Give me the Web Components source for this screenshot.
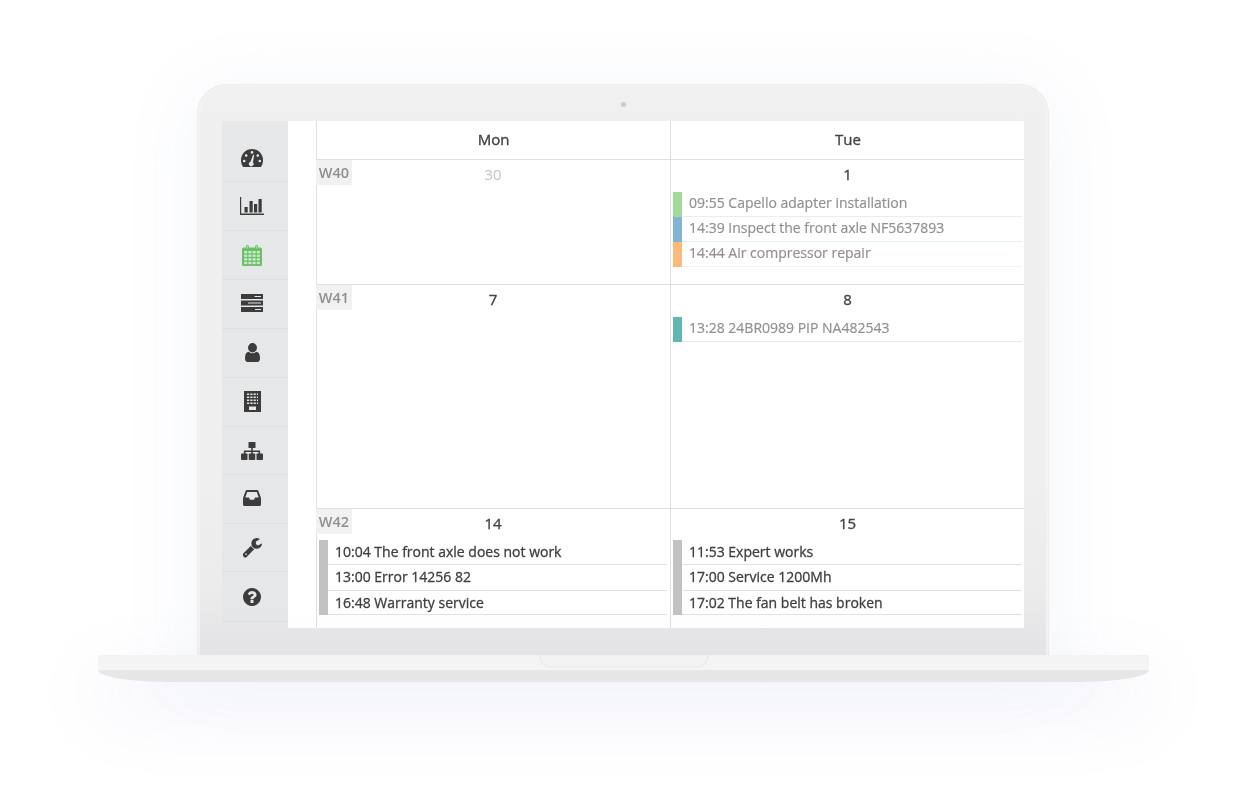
<!DOCTYPE html>
<html><head><meta charset="utf-8"><title>Calendar</title>
<style>
html,body{margin:0;padding:0;background:#fff;overflow:hidden}
body{font-family:"Open Sans","Liberation Sans",sans-serif;width:1248px;height:798px}
</style></head><body>
<x-laptop>
  <x-sidebar slot="sidebar">
    <x-nav icon="gauge"></x-nav><x-nav icon="chart"></x-nav><x-nav icon="calendar" active></x-nav><x-nav icon="server"></x-nav><x-nav icon="user"></x-nav><x-nav icon="building"></x-nav><x-nav icon="sitemap"></x-nav><x-nav icon="inbox"></x-nav><x-nav icon="wrench"></x-nav><x-nav icon="help"></x-nav>
  </x-sidebar>
  <x-calendar slot="main">
    <x-week h="124">
      <x-day week="W40" num="30" muted></x-day>
      <x-day num="1">
        <x-event c="#a5d99c" l="#e6f3e4" dim>09:55 Capello adapter installation</x-event>
        <x-event c="#85b4d2" l="#e0eef7" dim>14:39 Inspect the front axle NF5637893</x-event>
        <x-event c="#fbb97b" l="#fbf0e6" dim>14:44 Air compressor repair</x-event>
      </x-day>
    </x-week>
    <x-week h="223">
      <x-day week="W41" num="7"></x-day>
      <x-day num="8"><x-event c="#63b5b0" l="#dcefee" dim>13:28 24BR0989 PIP NA482543</x-event></x-day>
    </x-week>
    <x-week h="119" last>
      <x-day week="W42" num="14" tight>
        <x-event c="#c2c2c2" l="#e2e2e2">10:04 The front axle does not work</x-event>
        <x-event c="#c2c2c2" l="#e2e2e2" h="26">13:00 Error 14256 82</x-event>
        <x-event c="#c2c2c2" l="#e2e2e2" h="24">16:48 Warranty service</x-event>
      </x-day>
      <x-day num="15" tight>
        <x-event c="#c2c2c2" l="#e2e2e2">11:53 Expert works</x-event>
        <x-event c="#c2c2c2" l="#e2e2e2" h="26">17:00 Service 1200Mh</x-event>
        <x-event c="#c2c2c2" l="#e2e2e2" h="24">17:02 The fan belt has broken</x-event>
      </x-day>
    </x-week>
  </x-calendar>
</x-laptop>
<script>
const calCells=[6,9.6,13.2,16.8].map(y=>[2.2,6.4,10.6,14.8].map(x=>`<rect x="${x}" y="${y}" width="3" height="2.3"/>`).join("")).join("");
const ICONS={
gauge:{dy:1,box:[22,18],svg:`<svg viewBox="0 0 22 18"><path d="M2.200 18C.8 16 0 14 0 11a11 11 0 0 1 22 0c0 3-.8 5-2.200 7z"/><g fill="#e6e7e8"><circle cx="3.200" cy="12" r="1.300"/><circle cx="5.200" cy="6.600" r="1.300"/><circle cx="11" cy="3.400" r="1.300"/><circle cx="16.800" cy="6.600" r="1.300"/><circle cx="18.800" cy="12" r="1.300"/><path d="M12.100 5.800l1.100.3-1.300 7.300a2.300 2.300 0 1 1-2.400-.6z"/></g></svg>`},
chart:{dy:0,box:[24,18],svg:`<svg viewBox="0 0 24 18"><path d="M0 0h1.200v16.600H24V18H0z"/><rect x="4.500" y="10" width="3.200" height="5.500"/><rect x="9.500" y="4" width="3.200" height="11.500"/><rect x="14" y="7" width="3.200" height="8.500"/><rect x="18.500" y="2" width="3.200" height="13.500"/></svg>`},
calendar:{dy:0,box:[20,21],svg:`<svg viewBox="0 0 20 21"><path d="M1.500 2.500H4V1.400a1.400 1.400 0 0 1 2.800 0v1.100h6.400V1.400a1.400 1.400 0 0 1 2.800 0v1.100h2.500A1.500 1.500 0 0 1 20 4v15.500a1.500 1.500 0 0 1-1.500 1.500h-17A1.500 1.500 0 0 1 0 19.500V4a1.500 1.500 0 0 1 1.500-1.500z"/><g fill="#cfeace">${calCells}</g><path d="M5.400 1v2.600M14.600 1v2.600" stroke="#cfeace" stroke-width=".8" fill="none"/></svg>`},
server:{dy:-1,box:[22,18],svg:`<svg viewBox="0 0 22 18"><path fill-rule="evenodd" d="M0 0h22v5H0zm13.500 2v1H20V2zM0 6.500h22v5H0zm7 2v1h13v-1zM0 13h22v5H0zm14 2v1h6v-1z"/></svg>`},
user:{dy:-1,box:[15,19],svg:`<svg viewBox="256 128 1280 1536" preserveAspectRatio="none"><path d="M1536 1399q0 109-62.5 187t-150.5 78h-854q-88 0-150.5-78t-62.5-187q0-85 8.5-160.5t31.5-152 58.5-131 94-89 134.5-34.5q131 128 313 128t313-128q76 0 134.5 34.5t94 89 58.5 131 31.5 152 8.5 160.5zm-256-887q0 159-112.5 271.5t-271.5 112.5-271.5-112.5-112.5-271.5 112.5-271.5 271.5-112.5 271.5 112.5 112.5 271.5z"/></svg>`},
building:{dy:-1,box:[17,21],svg:`<svg viewBox="0 0 17 21"><path fill-rule="evenodd" d="M0 0h17v21H0zM3 2.500v1.500h2.200V2.500zm3.300 0v1.500h2.200V2.500zm3.300 0v1.500h2.200V2.500zm-6.600 3V7h2.200V5.500zm3.300 0V7h2.200V5.500zm3.300 0V7h2.200V5.500zm3.300-3v1.500H14V2.500zm0 3V7H14V5.500zM3 8.500V10h2.200V8.500zm3.300 0V10h2.200V8.500zm3.300 0V10h2.200V8.500zm3.300 0V10H14V8.500zM3 11.500V13h2.200v-1.500zm3.300 0V13h2.200v-1.500zm3.300 0V13h2.200v-1.500zm3.300 0V13H14v-1.500zM5 15.500V19h7v-3.500z"/></svg>`},
sitemap:{dy:0,box:[22,18],svg:`<svg viewBox="0 0 22 18"><rect x="7.500" y="0" width="7" height="6" rx=".6"/><rect x="0" y="11.500" width="6.500" height="6.500" rx=".8"/><rect x="7.750" y="11.500" width="6.500" height="6.500" rx=".8"/><rect x="15.500" y="11.500" width="6.500" height="6.500" rx=".8"/><path d="M10.200 5.500h1.600v2.900H19.100V12h-1.600V10h-5.700v2h-1.600v-2H4.500v2H2.900V8.400h7.300z"/></svg>`},
inbox:{dy:-1,box:[18,16],svg:`<svg viewBox="0 0 18 16"><path fill-rule="evenodd" d="M4 0h10a1.500 1.500 0 0 1 1.300.8L18 8v6.500a1.500 1.500 0 0 1-1.500 1.500h-15A1.500 1.500 0 0 1 0 14.500V8L2.700.8A1.500 1.500 0 0 1 4 0zm.2 2L2.300 7.500H6l1 2.200h4l1-2.200h3.700L13.800 2z"/></svg>`},
wrench:{dy:0,box:[19,20],svg:`<svg viewBox="128 128 1600 1664" preserveAspectRatio="none"><path d="M448 1472q0-26-19-45t-45-19-45 19-19 45 19 45 45 19 45-19 19-45zm644-420l-682 682q-37 37-90 37-52 0-91-37l-106-108q-38-36-38-90 0-53 38-91l681-681q39 98 114.5 173.5t173.5 114.5zm634-435q0 39-23 106-47 134-164.5 217.5t-258.5 83.5q-185 0-316.5-131.5t-131.5-316.5 131.5-316.5 316.5-131.5q58 0 121.5 16.5t107.5 46.5q16 11 16 28t-16 28l-293 169v224l193 107q5-3 79-48.5t135.5-81 70.5-35.5q15 0 23.5 10t8.5 25z"/></svg>`},
help:{dy:0,box:[18,18],svg:`<svg viewBox="0 128 1536 1536" preserveAspectRatio="none"><path d="M896 1376v-192q0-14-9-23t-23-9h-192q-14 0-23 9t-9 23v192q0 14 9 23t23 9h192q14 0 23-9t9-23zm256-672q0-88-55.5-163t-138.5-116-170-41q-243 0-371 213-15 24 8 42l132 100q7 6 19 6 16 0 25-12 53-68 86-92 34-24 86-24 48 0 85.5 26t37.5 59q0 38-20 61t-68 45q-63 28-115.5 86.5t-52.5 125.5v36q0 14 9 23t23 9h192q14 0 23-9t9-23q0-19 21.5-49.5t54.5-49.5q32-18 49-28.5t46-35 44.5-48 28-60.5 12.5-81zm384 192q0 209-103 385.5t-279.5 279.5-385.5 103-385.5-103-279.5-279.5-103-385.5 103-385.5 279.5-279.5 385.5-103 385.5 103 279.5 279.5 103 385.5z"/></svg>`}
};
function def(name,css,html,init){
  customElements.define(name,class extends HTMLElement{
    connectedCallback(){
      if(this.shadowRoot)return;
      const s=this.attachShadow({mode:"open"});
      s.innerHTML=`<style>${css}</style>`+(typeof html==="function"?html(this):html);
      if(init)init(this,s);
    }
  });
}
def("x-laptop",`
:host{display:flex;flex-direction:column;align-items:flex-start;padding:84px 0 0 98px;width:1051px}
.shell{position:relative;box-sizing:border-box;margin:0 0 -4px 99px;width:852px;height:575px;padding:37px 25px 31px 25px;border-radius:30px 30px 0 0;
 background:linear-gradient(#f0f0f1 0,#efeff0 70%,#ececed 87%,#e7e7e8 95%);
 box-shadow:inset 0 0 0 1px #ededee,inset 0 0 0 3px #f3f3f4,0 10px 70px 10px rgba(120,135,200,.07)}
.cam{position:absolute;left:424px;top:18px;width:5px;height:5px;border-radius:50%;background:#c9cacb}
.screen{display:flex;height:507px;width:802px;background:#fff;filter:blur(.45px)}
.base{position:relative;width:1051px;height:27px;background:linear-gradient(#f3f3f4 0,#f5f5f6 55%,#e7e7e8 56%,#e6e6e7 100%);border-radius:2px 2px 70px 70px/2px 2px 12px 12px;box-shadow:0 26px 70px 4px rgba(120,135,210,.12)}
.notch{position:absolute;left:441px;top:0;width:170px;height:13px;box-sizing:border-box;background:#f3f3f4;border-radius:0 0 14px 14px;box-shadow:inset 0 -2px 2px -1px #e9e9ea,inset 3px 0 3px -2px #e6e6e7,inset -3px 0 3px -2px #e6e6e7}
`,`<div class="shell"><div class="cam"></div><div class="screen"><slot name="sidebar"></slot><slot name="main"></slot></div></div><div class="base"><div class="notch"></div></div>`);
def("x-sidebar",`:host{display:flex;flex-direction:column;box-sizing:border-box;width:66px;height:507px;padding-top:12px;background:#e6e7e8;margin-right:28px}
::slotted(:nth-child(7)),::slotted(:nth-child(9)){height:48px}
::slotted(:nth-child(10)){height:50px}`,`<slot></slot>`);
def("x-nav",`:host{display:flex;align-items:center;justify-content:center;box-sizing:border-box;height:49px;border-bottom:1px solid #dedfe0;color:#3c3c3c;padding-right:6px}
:host([active]){color:#6cc06a}
svg{display:block;width:100%;height:100%;fill:currentColor}
.i{display:block}`,
(el)=>{const d=ICONS[el.getAttribute("icon")];return `<span class="i" style="width:${d.box[0]}px;height:${d.box[1]}px;margin-top:${d.dy*2}px">${d.svg}</span>`});
def("x-calendar",`:host{display:flex;flex-direction:column;width:708px;border-left:1px solid #dfdfdf;box-sizing:border-box;color:#444}
.head{display:grid;grid-template-columns:353px 355px;height:38px;border-bottom:1px solid #dfdfdf;font-size:15px;font-weight:400;-webkit-text-stroke:.35px currentColor;line-height:37px;text-align:center}
.head div+div{border-left:1px solid #dfdfdf}`,`<div class="head"><div>Mon</div><div>Tue</div></div><slot></slot>`);
def("x-week",`:host{display:grid;grid-template-columns:353px 355px;box-sizing:border-box;border-bottom:1px solid #dfdfdf}
:host([last]){border-bottom:0}`,`<slot></slot>`,(el)=>{el.style.height=(+el.getAttribute("h")+(el.hasAttribute("last")?0:1))+"px"});
def("x-day",`:host{display:block;position:relative;box-sizing:border-box;padding:0 3px 0 2px}
:host(:nth-child(2)){border-left:1px solid #dfdfdf}
.num{height:32px;line-height:29px;text-align:center;font-size:15px;font-weight:400;-webkit-text-stroke:.35px currentColor;color:#444}
:host([muted]) .num{color:#c4c4c4;-webkit-text-stroke:0}
:host([tight]) .num{height:31px;line-height:28px}
.wk{position:absolute;left:-1px;top:0;width:36px;height:25px;line-height:26px;background:#f1f1f1;border-radius:0 0 2px 0;color:#8f8f8f;font-size:14.5px;font-weight:600;text-align:center}`,
(el)=>`${el.getAttribute("week")?`<div class="wk">${el.getAttribute("week")}</div>`:""}<div class="num">${el.getAttribute("num")}</div><slot></slot>`);
def("x-event",`:host{display:flex;box-sizing:border-box;height:25px;font-size:14px;font-weight:400;-webkit-text-stroke:.3px currentColor;line-height:23px;color:#404040;white-space:nowrap}
:host([dim]){color:#919191;line-height:22px;-webkit-text-stroke:.2px currentColor}
.bar{width:9px;flex:none}
.t{flex:1;padding-left:7px;box-sizing:border-box}`,
(el)=>{if(el.getAttribute("h"))el.style.height=el.getAttribute("h")+"px";return `<div class="bar" style="background:${el.getAttribute("c")}"></div><div class="t" style="border-bottom:1px solid ${el.getAttribute("l")}"><slot></slot></div>`});
</script>
</body></html>
